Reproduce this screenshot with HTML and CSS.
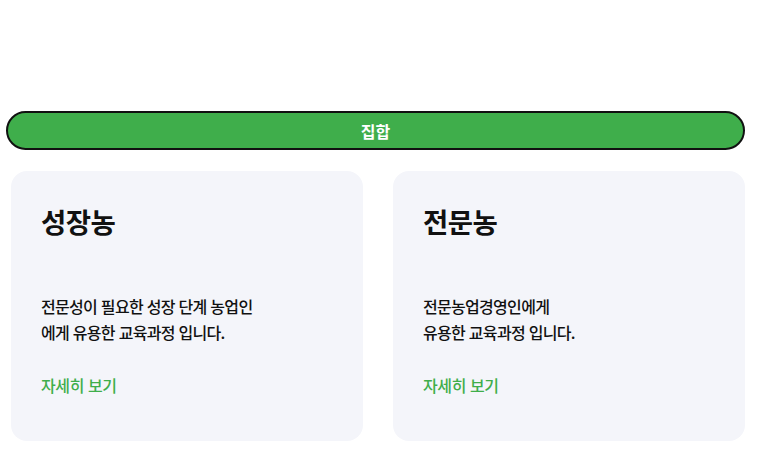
FILE: index.html
```html
<!DOCTYPE html>
<html lang="ko">
<head>
<meta charset="utf-8">
<link rel="stylesheet" href="styles.css">
</head>
<body>
<div class="page">
  <button class="tab">집합</button>
  <div class="cards">
    <div class="card">
      <h2 class="card-title">성장농</h2>
      <p class="card-desc">전문성이 필요한 성장 단계 농업인<br>에게 유용한 교육과정 입니다.</p>
      <a class="card-link" href="#">자세히 보기</a>
    </div>
    <div class="card">
      <h2 class="card-title">전문농</h2>
      <p class="card-desc">전문농업경영인에게<br>유용한 교육과정 입니다.</p>
      <a class="card-link" href="#">자세히 보기</a>
    </div>
  </div>
</div>
</body>
</html>
```
FILE: styles.css
```css
* { box-sizing: border-box; }
html, body { margin: 0; background: #fff; }
body {
  font-family: "Noto Sans CJK KR", "Noto Sans", sans-serif;
  color: #111;
}
.page {
  width: 765px;
  padding: 111px 20px 0 6px;
}
.tab {
  display: block;
  width: 739px;
  height: 39px;
  border: 2px solid #111;
  border-radius: 20px;
  background: #3fae4b;
  color: #fff;
  font-family: inherit;
  font-size: 16px;
  font-weight: 700;
  padding: 0;
}
.cards {
  display: flex;
  gap: 30px;
  margin: 21px 0 0 5px;
}
.card {
  width: 352px;
  height: 270px;
  background: #f4f5fa;
  border-radius: 16px;
  padding: 30px 30px;
  display: flex;
  flex-direction: column;
}
.card-title {
  margin: 0;
  font-size: 27.5px;
  font-weight: 700;
  line-height: 40px;
  letter-spacing: -0.5px;
  color: #111;
}
.card-desc {
  margin: 52px 0 0;
  font-size: 16px;
  font-weight: 500;
  line-height: 26px;
  letter-spacing: -0.7px;
  color: #111;
}
.card-link {
  margin-top: 28px;
  font-size: 16px;
  font-weight: 500;
  line-height: 24px;
  color: #3fae4b;
  text-decoration: none;
  letter-spacing: -0.4px;
}
```
